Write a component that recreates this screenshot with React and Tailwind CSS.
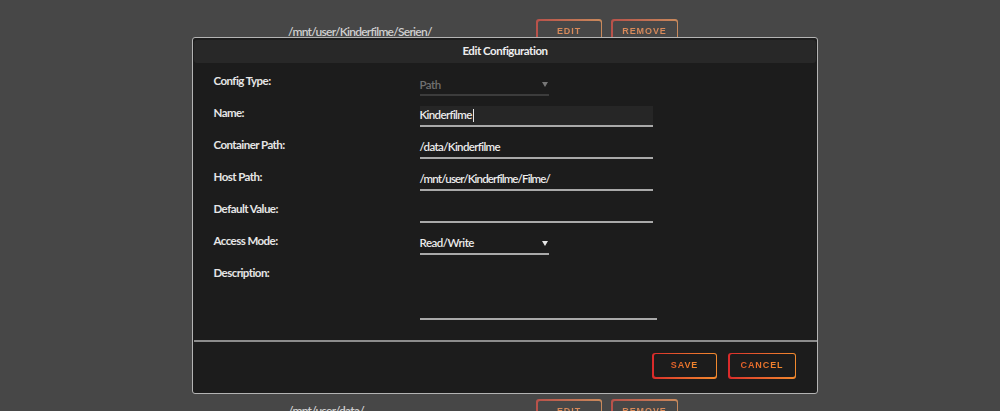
import React from "react";

const font = { fontFamily: "Lato, 'Liberation Sans', sans-serif" };
const btnFont = { fontFamily: "'Liberation Sans', Arial, sans-serif" };

function Arrow({ color }) {
  return (
    <svg width="6" height="5" viewBox="0 0 6 5" className="shrink-0">
      <path d="M0 0 H6 L3 5 Z" fill={color} />
    </svg>
  );
}

function GradBtn({ children, w, dim }) {
  return (
    <div
      className={`rounded-[3px] p-[1.5px] ${dim ? "bg-linear-to-r from-[#b8514a] to-[#c98a5c]" : "bg-linear-to-r from-[#d9282a] to-[#f28a2e]"}`}
      style={{ width: w }}
    >
      <div className={`h-[23px] rounded-[2px] flex items-center justify-center ${dim ? "bg-[#474747]" : "bg-[#1c1c1c]"}`}>
        <span
          className={`text-[9px] font-bold tracking-[0.9px] bg-clip-text text-transparent ${dim ? "bg-linear-to-r from-[#d98a5a] to-[#d98a5a]" : "bg-linear-to-r from-[#e8602a] to-[#f28a2e]"}`}
          style={btnFont}
        >
          {children}
        </span>
      </div>
    </div>
  );
}

function Row({ label, children, h = "h-[32px]" }) {
  return (
    <div className={`flex ${h}`}>
      <div className="w-[206px] text-[11.5px] leading-[18px] font-bold tracking-[-0.55px] text-[#e6e6e6]">{label}</div>
      <div className="flex-1">{children}</div>
    </div>
  );
}

function Field({ value, w = "w-[233px]", bg = false, caret = false, track = "tracking-[-0.65px]" }) {
  return (
    <div
      className={`${w} mt-[2px] h-[21px] border-b-2 border-[#a9a9a9] flex items-center text-[11.5px] font-semibold ${track} text-[#ececec] ${bg ? "bg-[#262626]" : ""}`}
    >
      <span>{value}</span>
      {caret && <span className="ml-px w-px h-[13px] bg-[#e8e8e8]" />}
    </div>
  );
}

export default function App() {
  return (
    <div className="relative w-[1000px] h-[411px] overflow-hidden bg-[#474747]" style={font}>
      {/* background page rows */}
      <div className="flex flex-col pt-[19px]">
        <div className="flex items-start h-[26px]">
          <div className="w-[288px]" />
          <div className="w-[248px] pt-[4px] text-[12px] font-semibold tracking-[-0.75px] text-[#cfcfcf]">/mnt/user/Kinderfilme/Serien/</div>
          <GradBtn w="66px" dim>EDIT</GradBtn>
          <div className="w-[9px]" />
          <GradBtn w="67px" dim>REMOVE</GradBtn>
        </div>
        <div className="h-[354px]" />
        <div className="flex items-start h-[26px]">
          <div className="w-[288px]" />
          <div className="w-[248px] pt-[3px] text-[12px] font-semibold tracking-[-0.75px] text-[#cfcfcf]">/mnt/user/data/</div>
          <GradBtn w="66px" dim>EDIT</GradBtn>
          <div className="w-[9px]" />
          <GradBtn w="67px" dim>REMOVE</GradBtn>
        </div>
      </div>

      {/* dialog overlay */}
      <div className="absolute left-[192px] top-[37px] w-[626px] h-[357px] rounded-[3px] border-[1.5px] border-[#b4b4b4] bg-[#1c1c1c] flex flex-col">
        <div className="mx-[1px] mt-[1.5px] h-[23px] rounded-[3px] bg-[#282828] flex items-center justify-center">
          <span className="text-[11.5px] font-bold tracking-[-0.45px] text-[#eeeeee]">Edit Configuration</span>
        </div>
        <div className="flex flex-col pl-[20.5px] pt-[9px]">
          <Row label="Config Type:">
            <div className="w-[129px] mt-[4px] h-[20px] border-b-2 border-[#3c3c3c] flex items-center justify-between pr-[1px] text-[11.5px] font-semibold tracking-[-0.5px] text-[#707070]">
              <span>Path</span>
              <Arrow color="#777777" />
            </div>
          </Row>
          <Row label="Name:">
            <Field value="Kinderfilme" bg caret />
          </Row>
          <Row label="Container Path:">
            <Field value="/data/Kinderfilme" />
          </Row>
          <Row label="Host Path:">
            <Field value="/mnt/user/Kinderfilme/Filme/" track="tracking-[-0.85px]" />
          </Row>
          <Row label="Default Value:">
            <Field value="" />
          </Row>
          <Row label="Access Mode:">
            <div className="w-[129px] mt-[2px] h-[21px] border-b-2 border-[#a9a9a9] flex items-center justify-between pr-[1px] text-[11.5px] font-semibold tracking-[-0.5px] text-[#ececec]">
              <span>Read/Write</span>
              <Arrow color="#e6e6e6" />
            </div>
          </Row>
          <Row label="Description:" h="h-[56px]">
            <div className="w-[237px] mt-[2px] h-[54px] border-b-2 border-[#a9a9a9]" />
          </Row>
        </div>
        <div className="mt-[20px] ml-[1px] h-[2px] bg-[#8c8c8c]" />
        <div className="flex justify-end gap-[11px] pr-[21px] pt-[11px]">
          <GradBtn w="65px">SAVE</GradBtn>
          <GradBtn w="68px">CANCEL</GradBtn>
        </div>
      </div>
    </div>
  );
}
